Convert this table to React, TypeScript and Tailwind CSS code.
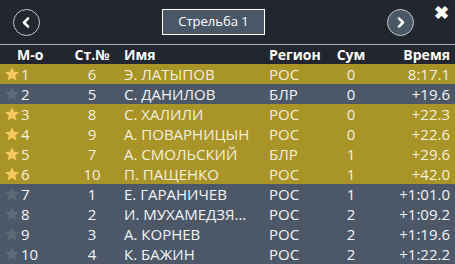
import React from "react";

type Row = {
  place: number;
  bib: number;
  name: string;
  region: string;
  sum: number;
  time: string;
};

const rows: Row[] = [
  { place: 1, bib: 6, name: "Э. ЛАТЫПОВ", region: "РОС", sum: 0, time: "8:17.1" },
  { place: 2, bib: 5, name: "С. ДАНИЛОВ", region: "БЛР", sum: 0, time: "+19.6" },
  { place: 3, bib: 8, name: "С. ХАЛИЛИ", region: "РОС", sum: 0, time: "+22.3" },
  { place: 4, bib: 9, name: "А. ПОВАРНИЦЫН", region: "РОС", sum: 0, time: "+22.6" },
  { place: 5, bib: 7, name: "А. СМОЛЬСКИЙ", region: "БЛР", sum: 1, time: "+29.6" },
  { place: 6, bib: 10, name: "П. ПАЩЕНКО", region: "РОС", sum: 1, time: "+42.0" },
  { place: 7, bib: 1, name: "Е. ГАРАНИЧЕВ", region: "РОС", sum: 1, time: "+1:01.0" },
  { place: 8, bib: 2, name: "И. МУХАМЕДЗЯ...", region: "РОС", sum: 2, time: "+1:09.2" },
  { place: 9, bib: 3, name: "А. КОРНЕВ", region: "РОС", sum: 2, time: "+1:19.6" },
  { place: 10, bib: 4, name: "К. БАЖИН", region: "РОС", sum: 2, time: "+1:22.2" },
];

// places that are highlighted in gold
const gold = new Set([1, 3, 4, 5, 6]);

const Star = ({ on }: { on: boolean }) => (
  <svg viewBox="0 0 24 24" className="h-[16px] w-[16px] shrink-0">
    <path
      d="M12 1.8l3.1 6.9 7.4.7-5.6 5 1.7 7.3L12 17.9l-6.6 3.8 1.7-7.3-5.6-5 7.4-.7z"
      fill={on ? "#f6c75a" : "#5d6976"}
    />
  </svg>
);

const Circle = ({ dir, filled }: { dir: "left" | "right"; filled?: boolean }) => (
  <button
    className={
      "flex h-[27px] w-[27px] items-center justify-center rounded-full border-[1.5px] border-[#c4c8ce] " +
      (filled ? "bg-[#4a5767]" : "bg-transparent")
    }
  >
    <svg viewBox="0 0 24 24" className="h-[15px] w-[15px]" fill="none" stroke="#ffffff" strokeWidth="4" strokeLinecap="round" strokeLinejoin="round">
      {dir === "left" ? <path d="M14.5 5.5L8 12l6.5 6.5" /> : <path d="M9.5 5.5L16 12l-6.5 6.5" />}
    </svg>
  </button>
);

const cols = "grid grid-cols-[66px_52px_151px_61px_42px_1fr] items-center";

export default function App() {
  return (
    <div className="h-[264px] w-[455px] overflow-hidden bg-[#22262e] font-['Open_Sans',sans-serif] text-white">
      <div className="flex h-[45px] items-center border-b border-[#aeb2b8] pl-[13px]">
        <Circle dir="left" />
        <div className="ml-[122px] flex h-[26px] w-[103px] items-center justify-center border-[1.5px] border-white bg-[#4a5767] text-[13px] text-white">
          Стрельба 1
        </div>
        <div className="ml-[122px]">
          <Circle dir="right" filled />
        </div>
        <span className="mb-[20px] ml-[20px] text-[18px] font-black leading-none">✖</span>
      </div>

      <div className={cols + " h-[19px] text-[14px] font-bold leading-[19px]"}>
        <span className="pl-[17px]">М-о</span>
        <span className="text-center">Ст.№</span>
        <span className="pl-[6px]">Имя</span>
        <span>Регион</span>
        <span className="text-center">Сум</span>
        <span className="pr-[5px] text-right">Время</span>
      </div>

      {rows.map((r) => {
        const on = gold.has(r.place);
        return (
          <div
            key={r.place}
            className={
              cols +
              " h-[20px] whitespace-nowrap text-[15px] leading-[20px] " +
              (on ? "bg-[#a99427] text-[#f4efdc]" : "bg-[#4c5868] text-[#f2f4f6]")
            }
          >
            <span className="flex items-center gap-[1px] pl-[4px]">
              <Star on={on} />
              {r.place}
            </span>
            <span className="text-center">{r.bib}</span>
            <span className="pl-[6px]">{r.name}</span>
            <span>{r.region}</span>
            <span className="text-center">{r.sum}</span>
            <span className="pr-[5px] text-right">{r.time}</span>
          </div>
        );
      })}
    </div>
  );
}
